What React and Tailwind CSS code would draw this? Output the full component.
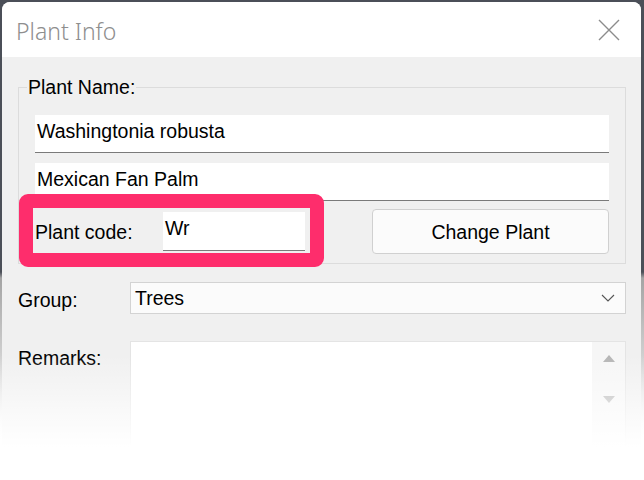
import React from "react";

const CloseIcon = () => (
    <svg width="22" height="22" viewBox="0 0 22 22" fill="none">
        <path d="M1 1L21 21M21 1L1 21" stroke="#8c8c8c" strokeWidth="1.4" />
    </svg>
);

const Chevron = () => (
    <svg width="14" height="8" viewBox="0 0 14 8" fill="none">
        <path d="M1 1L7 7L13 1" stroke="#555" strokeWidth="1.1" />
    </svg>
);

const TextBox = ({ value, className = "" }) => (
    <div
        className={`bg-white border-b border-[#7a7a7a] flex items-start pl-[2px] pt-[5px] text-[19.5px] leading-[22px] text-black ${className}`}
    >
        {value}
    </div>
);

const App = () => {
    return (
        <div className="relative w-[644px] h-[480px] overflow-hidden pt-[2px] pl-[2px] pr-[3px] bg-[linear-gradient(to_bottom,#4b4f58_0,#4b4f58_272px,#a4a4a4_278px,#ffffff_440px)] font-['Liberation_Sans',Arial,sans-serif]">
            <div className="h-full flex flex-col rounded-t-[8px] overflow-hidden bg-[#f0f0f0]">
                {/* title bar */}
                <div className="h-[55px] shrink-0 bg-white flex items-center justify-between pl-[14px] pr-[21px]">
                    <span className="pt-[3px] text-[23px] text-[#8e8e8e] font-['Noto_Sans',sans-serif] font-light">
                        Plant Info
                    </span>
                    <CloseIcon />
                </div>

                {/* body */}
                <div className="flex-1 flex flex-col pl-[16px] pr-[15px] text-[19.5px] leading-[22px] text-black">
                    <fieldset className="mt-[19px] border border-[#dcdcdc] px-[16px] pt-[17px] pb-[9px]">
                        <legend className="-ml-[8px] px-[1px] text-[19.5px] leading-[22px]">
                            Plant Name:
                        </legend>
                        <TextBox value="Washingtonia robusta" className="h-[38px]" />
                        <TextBox value="Mexican Fan Palm" className="h-[38px] mt-[10px]" />
                        <div className="mt-[8px] flex items-center">
                            <span className="w-[128px]">Plant code:</span>
                            <TextBox value="Wr" className="w-[142px] h-[39px] pt-[4px]" />
                            <button className="ml-auto w-[237px] h-[45px] rounded-[4px] border border-[#d0d0d0] bg-[#fbfbfb] text-[19.5px]">
                                Change Plant
                            </button>
                        </div>
                    </fieldset>

                    <div className="mt-[18px] flex items-center">
                        <span className="w-[112px] pt-[4px]">Group:</span>
                        <div className="flex-1 h-[32px] border border-[#d3d3d3] bg-[#fbfbfb] flex items-center justify-between pl-[4px] pr-[10px]">
                            <span>Trees</span>
                            <Chevron />
                        </div>
                    </div>

                    <div className="mt-[27px] flex flex-1">
                        <span className="w-[112px] pt-[6px]">Remarks:</span>
                        <div className="flex-1 border border-[#e4e4e4] bg-white flex justify-end">
                            <div className="w-[33px] bg-[#f6f6f6] flex flex-col items-center pt-[13px] gap-[34px]">
                                <div className="w-0 h-0 border-l-[6px] border-r-[6px] border-b-[7px] border-l-transparent border-r-transparent border-b-[#b4b4b4]" />
                                <div className="w-0 h-0 border-l-[6px] border-r-[6px] border-t-[7px] border-l-transparent border-r-transparent border-t-[#b4b4b4]" />
                            </div>
                        </div>
                    </div>
                </div>
            </div>

            {/* annotation highlight */}
            <div className="absolute left-[19px] top-[194px] w-[305px] h-[73px] rounded-[9px] border-[14px] border-[#fe2d6c]" />

            {/* bottom fade */}
            <div className="absolute inset-x-0 top-[355px] bottom-0 bg-[linear-gradient(to_bottom,rgba(255,255,255,0)_0,#ffffff_92px)]" />
        </div>
    );
};

export default App;
